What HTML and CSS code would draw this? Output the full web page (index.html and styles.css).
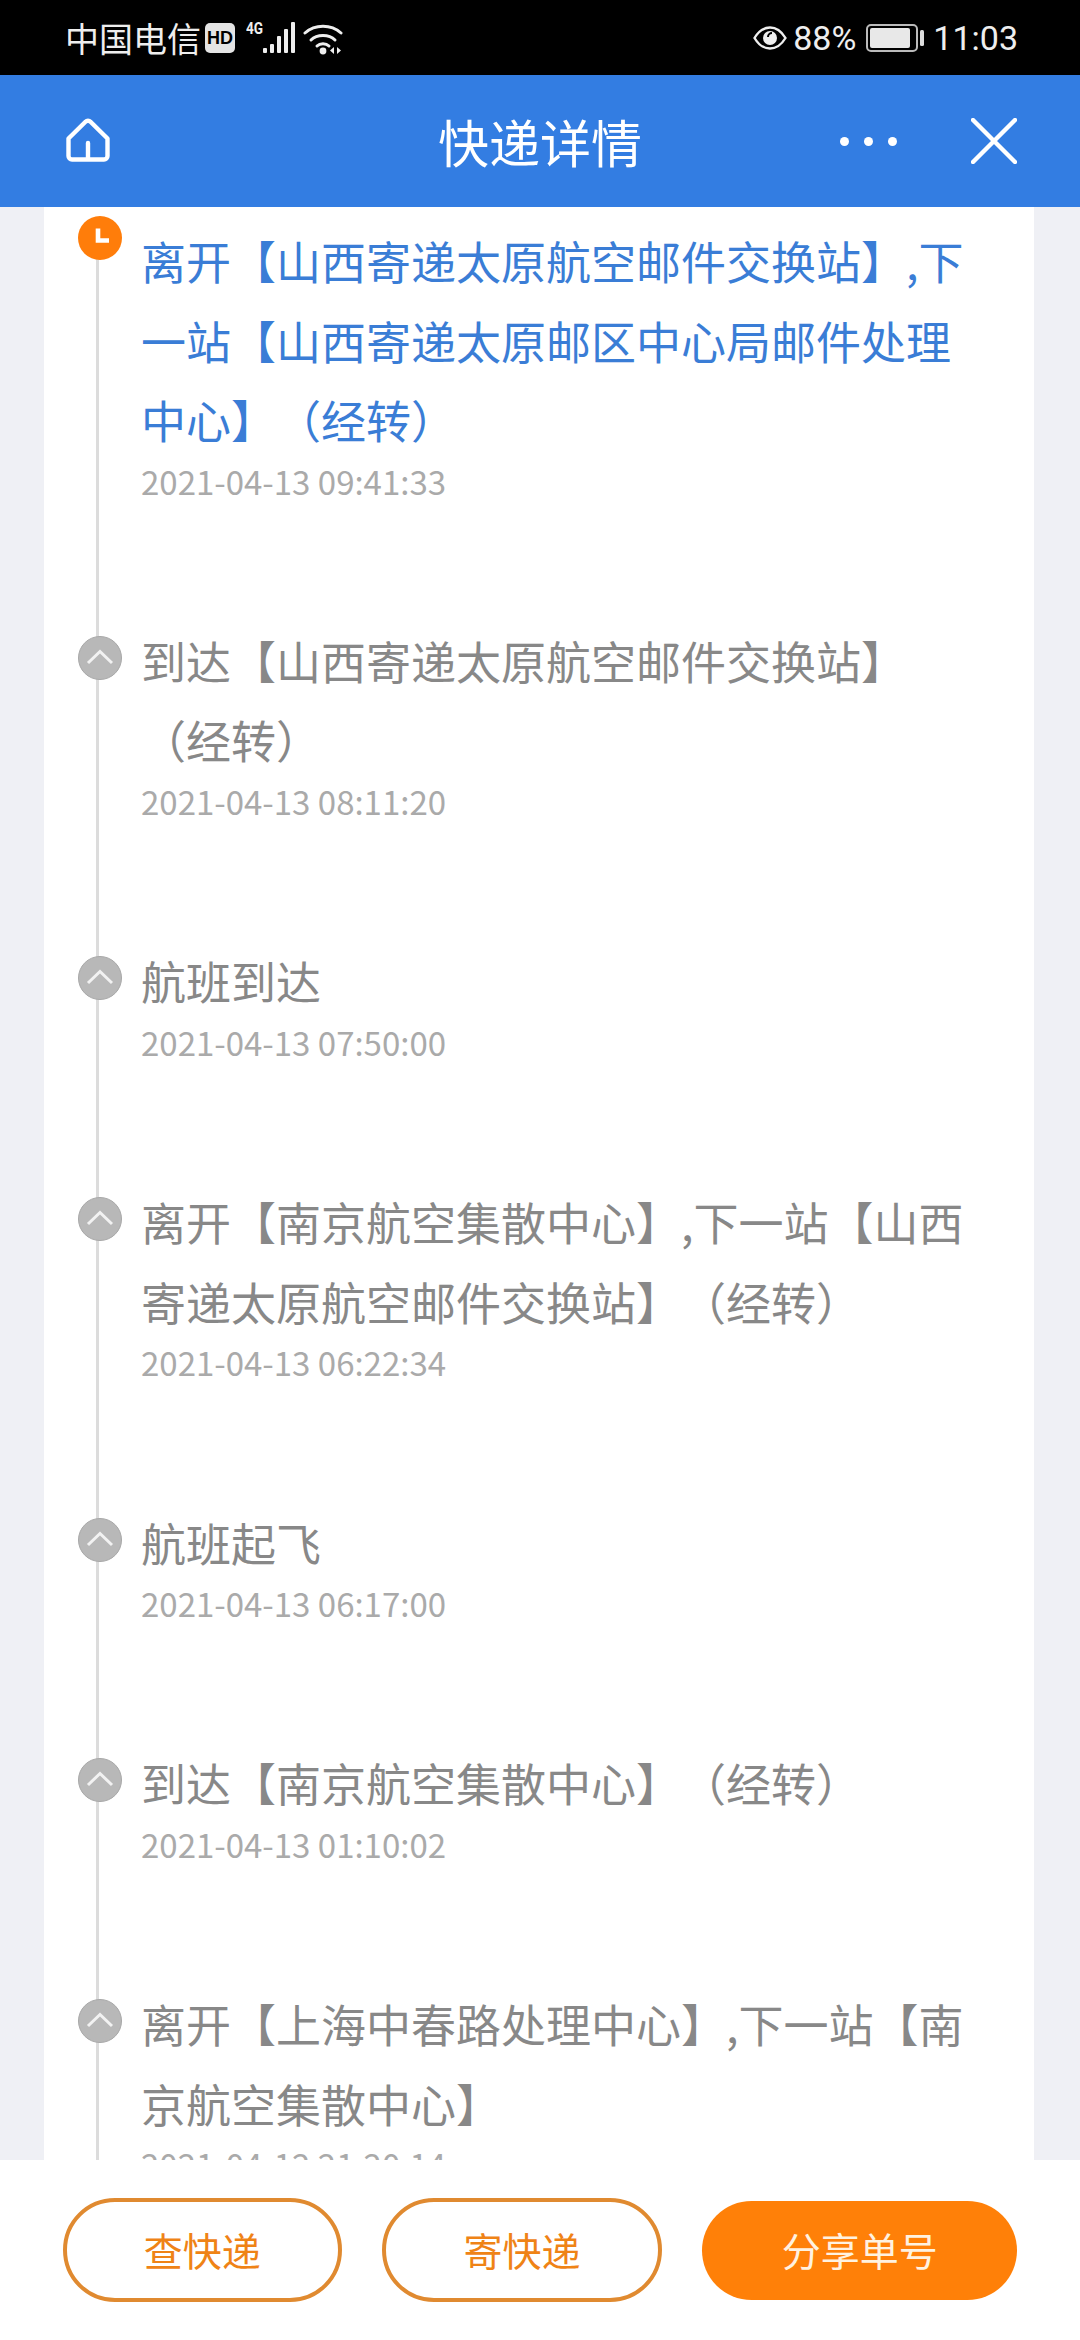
FILE: index.html
```html
<!DOCTYPE html>
<html lang="zh-CN">
<head>
<meta charset="utf-8">
<title>快递详情</title>
<link rel="stylesheet" href="styles.css">
</head>
<body>
<div class="page">
  <header class="status">
    <div class="status-left">
      <span class="carrier">中国电信</span>
      <span class="hd">HD</span>
      <span class="net">4G</span>
      <svg class="bars" viewBox="0 0 33 32" width="33" height="32"><g fill="#eee"><rect x="0" y="26" width="4" height="5" rx="1"/><rect x="7" y="22" width="4" height="9" rx="1"/><rect x="14" y="14" width="4" height="17" rx="1"/><rect x="21" y="7" width="4" height="24" rx="1"/><rect x="28" y="0" width="4" height="31" rx="1"/></g></svg>
      <svg class="wifi" viewBox="0 0 40 32" width="40" height="32"><g fill="none" stroke="#eee" stroke-width="3" stroke-linecap="round"><path d="M2 10C12 1 28 1 38 10"/><path d="M8 17C14 11 26 11 32 17"/><path d="M14 23C17 20 23 20 26 23"/></g><circle cx="20" cy="28" r="3.4" fill="#eee"/><path d="M31 24v7l-4-3.500zM34 24v7l4-3.500z" fill="#eee"/></svg>
    </div>
    <div class="status-right">
      <svg class="eye" viewBox="0 0 34 26" width="34" height="26"><path d="M1.500 13C6 5.500 11 2.500 17 2.500S28 5.500 32.500 13C28 20.500 23 23.500 17 23.500S6 20.500 1.500 13Z" fill="none" stroke="#eee" stroke-width="2.400"/><circle cx="17" cy="13" r="7" fill="#eee"/><path d="M15 12a4 4 0 0 1 4-4" fill="none" stroke="#000" stroke-width="2"/></svg>
      <span class="pct">88%</span>
      <svg class="battery" viewBox="0 0 58 28" width="58" height="28"><rect x="1" y="1" width="50" height="26" rx="4" fill="none" stroke="#bbb" stroke-width="2"/><rect x="4" y="4" width="40" height="20" rx="2" fill="#e8e8e8"/><rect x="54" y="6" width="4" height="16" rx="1.500" fill="#ddd"/></svg>
      <span class="clock">11:03</span>
    </div>
  </header>

  <nav class="nav">
    <svg class="home" viewBox="0 0 44 44" width="44" height="44"><path d="M2.500 20.500 19.500 3.800a3.500 3.500 0 0 1 5 0L41.500 20.500V38a3.500 3.500 0 0 1-3.500 3.500H6A3.500 3.500 0 0 1 2.500 38ZM22 41V25" fill="none" stroke="#fff" stroke-width="4.400" stroke-linecap="round" stroke-linejoin="round"/></svg>
    <h1 class="title">快递详情</h1>
    <div class="nav-actions">
      <div class="more"><i></i><i></i><i></i></div>
      <svg class="close" viewBox="0 0 46 46" width="46" height="46"><path d="M2 2 44 44M44 2 2 44" fill="none" stroke="#fff" stroke-width="4.400" stroke-linecap="round"/></svg>
    </div>
  </nav>

  <main class="scroll">
    <section class="card">
      <article class="item item-current">
        <span class="dot dot-current"><svg viewBox="0 0 44 44" width="44" height="44"><path d="M20 12.500V24.500H31" fill="none" stroke="#fff" stroke-width="4.600"/></svg></span>
        <p class="text">离开【山西寄递太原航空邮件交换站】,下一站【山西寄递太原邮区中心局邮件处理中心】（经转）</p>
        <p class="time">2021-04-13 09:41:33</p>
      </article>
      <article class="item">
        <span class="dot"><svg viewBox="0 0 44 44" width="44" height="44"><path d="M10 27 22 15.500 34 27" fill="none" stroke="#f2f2f2" stroke-width="3"/></svg></span>
        <p class="text">到达【山西寄递太原航空邮件交换站】（经转）</p>
        <p class="time">2021-04-13 08:11:20</p>
      </article>
      <article class="item">
        <span class="dot"><svg viewBox="0 0 44 44" width="44" height="44"><path d="M10 27 22 15.500 34 27" fill="none" stroke="#f2f2f2" stroke-width="3"/></svg></span>
        <p class="text">航班到达</p>
        <p class="time">2021-04-13 07:50:00</p>
      </article>
      <article class="item">
        <span class="dot"><svg viewBox="0 0 44 44" width="44" height="44"><path d="M10 27 22 15.500 34 27" fill="none" stroke="#f2f2f2" stroke-width="3"/></svg></span>
        <p class="text">离开【南京航空集散中心】,下一站【山西寄递太原航空邮件交换站】（经转）</p>
        <p class="time">2021-04-13 06:22:34</p>
      </article>
      <article class="item">
        <span class="dot"><svg viewBox="0 0 44 44" width="44" height="44"><path d="M10 27 22 15.500 34 27" fill="none" stroke="#f2f2f2" stroke-width="3"/></svg></span>
        <p class="text">航班起飞</p>
        <p class="time">2021-04-13 06:17:00</p>
      </article>
      <article class="item">
        <span class="dot"><svg viewBox="0 0 44 44" width="44" height="44"><path d="M10 27 22 15.500 34 27" fill="none" stroke="#f2f2f2" stroke-width="3"/></svg></span>
        <p class="text">到达【南京航空集散中心】（经转）</p>
        <p class="time">2021-04-13 01:10:02</p>
      </article>
      <article class="item">
        <span class="dot"><svg viewBox="0 0 44 44" width="44" height="44"><path d="M10 27 22 15.500 34 27" fill="none" stroke="#f2f2f2" stroke-width="3"/></svg></span>
        <p class="text">离开【上海中春路处理中心】,下一站【南京航空集散中心】</p>
        <p class="time">2021-04-12 21:20:14</p>
      </article>
    </section>
  </main>

  <footer class="footer">
    <button class="btn btn-outline">查快递</button>
    <button class="btn btn-outline btn-wide">寄快递</button>
    <button class="btn btn-solid">分享单号</button>
  </footer>
</div>
</body>
</html>
```
FILE: styles.css
```css
* { box-sizing: border-box; }
html, body { margin: 0; padding: 0; }
body {
  width: 1080px;
  height: 2340px;
  overflow: hidden;
  font-family: "Noto Sans CJK SC", "Noto Sans", sans-serif;
  text-spacing-trim: space-all;
  background: #eff0f5;
}
.page { width: 1080px; height: 2340px; display: flex; flex-direction: column; }

.status {
  height: 75px;
  flex: none;
  background: #000;
  color: #eee;
  display: flex;
  justify-content: space-between;
  align-items: center;
  padding: 0 62px 0 65px;
}
.status-left, .status-right { display: flex; align-items: center; }
.carrier { font-size: 34px; line-height: 40px; }
.hd {
  width: 30px; height: 30px; margin-left: 4px;
  background: #e4e4e4; color: #000; border-radius: 5px;
  font: 700 18px/30px "Liberation Sans", sans-serif;
  text-align: center;
}
.net {
  width: 17px; margin-left: 11px; align-self: flex-start;
  font: 700 16px/14px "Roboto", sans-serif;
  transform: scaleX(.85); transform-origin: left top;
  margin-top: 4px;
}
.wifi { margin-left: 7px; margin-top: 2px; }
.eye { margin-right: 6px; }
.pct { font: 34px/40px "Roboto", sans-serif; }
.battery { margin-left: 10px; }
.clock { font: 34px/40px "Roboto", sans-serif; margin-left: 9px; }

.nav {
  height: 132px;
  flex: none;
  background: #337de2;
  display: flex;
  align-items: center;
  justify-content: center;
  position: relative;
  color: #fff;
}
.home { position: absolute; left: 66px; top: 43px; }
.title { margin: 0; font-size: 51px; font-weight: 400; line-height: 60px; }
.nav-actions {
  position: absolute; right: 63px; top: 43px;
  display: flex; align-items: center;
}
.more { display: flex; gap: 15px; margin-right: 74px; }
.more i { width: 9px; height: 9px; border-radius: 50%; background: #fff; }

.scroll { flex: 1; min-height: 0; overflow: hidden; }
.card {
  margin: 0 46px 0 44px;
  background: #fff;
  padding-top: 14px;
}
.item {
  position: relative;
  padding: 0 0 122.4px 97px;
}
.item::before {
  content: "";
  position: absolute;
  left: 52px; top: 0; bottom: 0;
  width: 3px;
  background: #dcdcdc;
}
.item-current::before { top: 20px; }
.dot {
  position: absolute;
  left: 34px; top: 15px;
  width: 44px; height: 44px;
  border-radius: 50%;
  background: #b8b8b8;
  border: 1px solid #a8a8a8;
  display: flex; align-items: center; justify-content: center;
}
.dot svg { flex: none; }
.dot-current { top: -5px; background: #ff7d0a; border: 0; }
.text {
  margin: 0;
  width: 840px;
  font-size: 45px;
  line-height: 79.5px;
  color: #888;
}
.item-current .text { color: #3a7dd6; }
.time {
  margin: 3px 0 0;
  font-size: 33px;
  line-height: 36px;
  color: #aaa;
}

.footer {
  height: 180px;
  flex: none;
  background: #fff;
  display: flex;
  align-items: center;
  padding: 0 63px 0 63px;
}
.btn {
  height: 104px;
  border-radius: 52px;
  font-family: "Noto Sans CJK SC", sans-serif;
  font-size: 39px;
  padding: 0 0 2px;
  margin: 0;
}
.btn-outline {
  width: 279px;
  background: #fff;
  border: 4px solid #e08a30;
  color: #ef8316;
  margin-right: 40px;
}
.btn-wide { width: 281px; }
.btn-solid {
  width: 315px;
  height: 99px;
  background: #ff8008;
  border: 0;
  color: #fff2e0;
}
```
